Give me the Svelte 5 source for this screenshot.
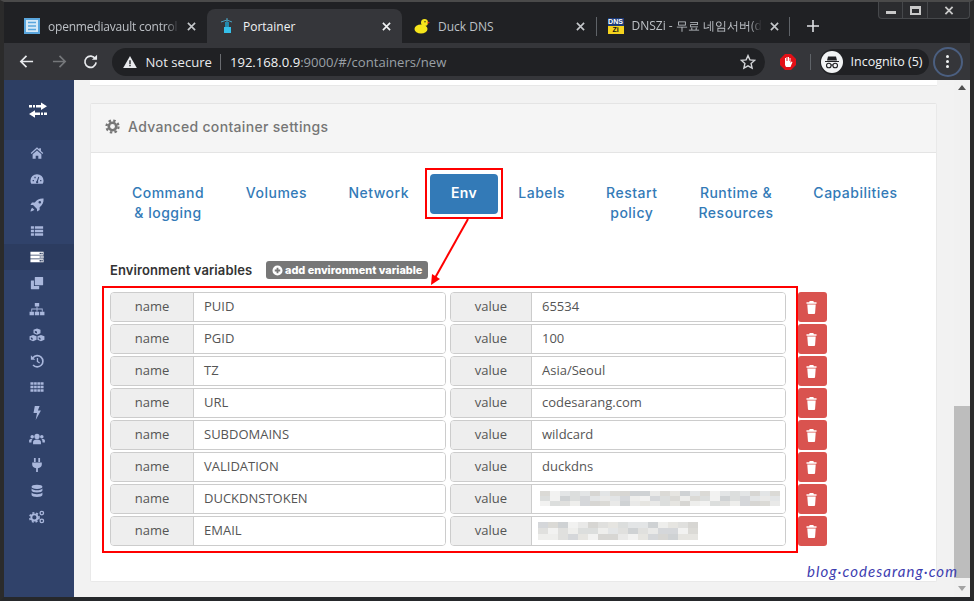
<script>
  const pills = [
    { lines: ['Command', '& logging'] },
    { lines: ['Volumes'] },
    { lines: ['Network'] },
    { lines: ['Env'], active: true },
    { lines: ['Labels'] },
    { lines: ['Restart', 'policy'] },
    { lines: ['Runtime &', 'Resources'] },
    { lines: ['Capabilities'] }
  ];
  const rows = [
    { name: 'PUID', value: '65534' },
    { name: 'PGID', value: '100' },
    { name: 'TZ', value: 'Asia/Seoul' },
    { name: 'URL', value: 'codesarang.com' },
    { name: 'SUBDOMAINS', value: 'wildcard' },
    { name: 'VALIDATION', value: 'duckdns' },
    { name: 'DUCKDNSTOKEN', blur: 'token' },
    { name: 'EMAIL', blur: 'email' }
  ];
  const shades = ['#e6e5e1', '#d5d7da', '#e0e0de', '#dcdedd', '#d7d6d3', '#eeeeec', '#e3e5e6', '#cfd2d4', '#f2f2f1', '#dbdad6', '#e9e9e8'];
  function cells(count, seed) {
    const out = [];
    let s = seed;
    for (let i = 0; i < count; i++) {
      s = (s * 31 + 17) % 97;
      out.push(shades[s % shades.length]);
    }
    return out;
  }
  const blurCells = { token: cells(72, 5), email: cells(48, 11) };
</script>

<div class="window">
  <div class="tabstrip">
    <div class="tab">
      <svg class="fav" viewBox="0 0 16 16"><rect width="16" height="16" fill="#5aa6dd"/><rect x="2" y="2" width="12" height="12" fill="#d6e9f7"/><path d="M4 4.5h8M4 8h8M4 11.5h8" stroke="#5aa6dd" stroke-width="1.6"/></svg>
      <span class="title fade first">openmediavault control</span>
      <svg class="close" viewBox="0 0 10 10"><path d="M1 1l8 8M9 1l-8 8"/></svg>
    </div>
    <div class="tab active">
      <svg class="fav" viewBox="0 0 16 16"><path d="M2 4l6-2 5 2M8 0v10" stroke="#4aa3c4" stroke-width="1" fill="none"/><rect x="5" y="9" width="7" height="6" fill="#35c0ea"/><rect x="6" y="4" width="4" height="5" fill="#2489ad"/></svg>
      <span class="title">Portainer</span>
      <svg class="close" viewBox="0 0 10 10"><path d="M1 1l8 8M9 1l-8 8"/></svg>
    </div>
    <div class="tab duck">
      <svg class="fav" viewBox="0 0 16 16"><ellipse cx="7" cy="11" rx="6.5" ry="4.5" fill="#f6e51b"/><circle cx="10.5" cy="4.5" r="3.5" fill="#f6e51b"/><path d="M13.5 3.5l2.5 1.2-2.5 1z" fill="#e0342a"/><circle cx="11" cy="3.8" r=".7" fill="#222"/></svg>
      <span class="title">Duck DNS</span>
      <svg class="close" viewBox="0 0 10 10"><path d="M1 1l8 8M9 1l-8 8"/></svg>
    </div>
    <div class="tab divided">
      <div class="dnsfav"><span class="dns">DNS</span><span class="zi">Zi</span></div>
      <span class="title fade">DNSZi - 무료 네임서버(d</span>
      <svg class="close" viewBox="0 0 10 10"><path d="M1 1l8 8M9 1l-8 8"/></svg>
    </div>
    <div class="newtab">
      <svg viewBox="0 0 12 12" width="12" height="12"><path d="M6 0v12M0 6h12" stroke="#dfe1e5" stroke-width="1.6"/></svg>
    </div>
    <div class="winctl">
      <span class="wbtn min"><i></i></span>
      <span class="wbtn max"><i></i></span>
      <span class="wbtn cls"><svg viewBox="0 0 10 10" width="10" height="9"><path d="M1 1l8 8M9 1l-8 8" stroke="#c9c9c9" stroke-width="2"/></svg></span>
    </div>
  </div>

  <div class="toolbar">
    <svg class="navicon" viewBox="0 0 16 16"><path d="M15 8H2M8 2L2 8l6 6" fill="none" stroke="#e8eaed" stroke-width="1.8"/></svg>
    <svg class="navicon" viewBox="0 0 16 16"><path d="M1 8h13M8 2l6 6-6 6" fill="none" stroke="#75777a" stroke-width="1.8"/></svg>
    <svg class="navicon reload" viewBox="0 0 16 16"><path d="M13.2 5.2A6 6 0 1 0 14 9" fill="none" stroke="#e8eaed" stroke-width="1.8"/><path d="M9.5 6H15V.8z" fill="#e8eaed"/></svg>
    <div class="omnibox">
      <svg class="warn" viewBox="0 0 16 14"><path d="M8 0l8 14H0z" fill="#e8eaed"/><path d="M7.2 5h1.6v4.5H7.2zM7.2 10.5h1.6V12H7.2z" fill="#202124"/></svg>
      <span class="secure">Not secure</span>
      <span class="omnisep"></span>
      <span class="url"><b>192.168.0.9</b>:9000/#/containers/new</span>
      <svg class="star" viewBox="0 0 16 16"><path d="M8 1.6l1.9 4.3 4.7.5-3.5 3.1 1 4.6L8 11.8l-4.1 2.3 1-4.6L1.400 6.400l4.700-.5z" fill="none" stroke="#d3d5d8" stroke-width="1.400"/></svg>
    </div>
    <svg class="hand" viewBox="0 0 16 16"><path d="M5 0h6l5 5v6l-5 5H5l-5-5V5z" fill="#e30f16"/><path d="M5 7V4h1v3h.5V3h1v4H8V3h1v4h.5V4h1v5l1-1.500 1 .5L10.500 13H6L5 11z" fill="#fff"/></svg>
    <span class="toolsep"></span>
    <div class="incognito">
      <svg class="spy" viewBox="0 0 22 22"><circle cx="11" cy="11" r="11" fill="#f1f3f4"/><path d="M7 5.500h8l1 4H6zM4 10h14v1H4z" fill="#202124"/><circle cx="7.800" cy="14.500" r="2.300" fill="none" stroke="#202124" stroke-width="1.100"/><circle cx="14.200" cy="14.500" r="2.300" fill="none" stroke="#202124" stroke-width="1.100"/><path d="M10 14h2" stroke="#202124"/></svg>
      <span>Incognito (5)</span>
    </div>
    <div class="kebab"><i></i><i></i><i></i></div>
  </div>

  <div class="viewport">
    <nav class="sidebar">
      <div class="brand">
        <svg viewBox="0 0 20 16" width="20" height="16"><path d="M1 3h3v2.400H1zM5 3h2v2.400H5zM8 3h5V.5L19 4.200 13 8V5.400H8zM19 10.600h-3V13h3zM15 10.600h-2V13h2zM12 10.600H7V8.200L1 12l6 3.700V13h5z" fill="#fff"/></svg>
      </div>
      <div class="item"><svg viewBox="0 0 16 16"><path d="M8 1.500L.8 8l1 1L8 3.500 14.200 9l1-1-2.700-2.400V2.500h-2v1.300z"/><path d="M3 9.500l5-4.500 5 4.500V14.500H9.500V11h-3v3.500H3z"/></svg></div>
      <div class="item"><svg viewBox="0 0 16 16"><path fill-rule="evenodd" d="M8 2.500A7.500 7.500 0 0 0 .5 10c0 1.500.4 2.700 1 3.500h13c.6-.8 1-2 1-3.500A7.500 7.500 0 0 0 8 2.500zM3 9h1.500v1.500H3zM5 5.500h1.500V7H5zM11.500 9H13v1.500h-1.500zM9.500 5.500l1 .5L9 10.500a1.300 1.300 0 1 1-1.300-.2z"/></svg></div>
      <div class="item"><svg viewBox="0 0 16 16"><path fill-rule="evenodd" d="M15.500.5c-4.500-.3-7.500 1.200-10 4.500H2.200L.5 8h3L8 12.500v3l3-1.800V10.500c3.300-2.500 4.800-5.500 4.500-10zM11.200 3.300a1.500 1.500 0 1 1 0 3 1.500 1.500 0 0 1 0-3zM2.500 11c-1 .8-1.700 2.500-2 4.500 2-.3 3.700-1 4.500-2z"/></svg></div>
      <div class="item"><svg viewBox="0 0 16 16"><path d="M1 2.500h3.500v3H1zM5.500 2.500H15v3H5.500zM1 6.500h3.500v3H1zM5.500 6.500H15v3H5.500zM1 10.500h3.500v3H1zM5.500 10.500H15v3H5.500z"/></svg></div>
      <div class="item current"><svg viewBox="0 0 16 16"><path fill-rule="evenodd" d="M.5 2h15v3.500H.5zM11 3v1.500h1.500V3zM13 3v1.500h1.500V3zM.5 6.300h15v3.400H.5zM11 7.300v1.400h1.500V7.300zM13 7.300v1.400h1.500V7.300zM.5 10.500h15V14H.5zM11 11.500V13h1.500v-1.500zM13 11.500V13h1.500v-1.500z"/></svg></div>
      <div class="item"><svg viewBox="0 0 16 16"><path d="M6 1h8.500a.5.500 0 0 1 .5.500V10a.5.500 0 0 1-.5.500H6a.5.500 0 0 1-.5-.500V1.500A.5.500 0 0 1 6 1z"/><path d="M4.500 5H1.500a.5.500 0 0 0-.5.500V14.500a.5.500 0 0 0 .5.500h8.500a.5.500 0 0 0 .5-.500V11.500H5a.5.500 0 0 1-.5-.500z"/></svg></div>
      <div class="item"><svg viewBox="0 0 18 16"><path d="M6.500 1h5v4h-5zM.5 11h5v4h-5zM6.500 11h5v4h-5zM12.500 11h5v4h-5z"/><path d="M8.500 5h1v2.500H15.500V11h-1V8.500h-5V11h-1V8.500h-5V11h-1V7.500h6z"/></svg></div>
      <div class="item"><svg viewBox="0 0 18 16"><path fill-rule="evenodd" d="M9 .5l4 1.500v4l-4 1.600-4-1.600V2zM6.500 3v2.200l2.500 1V4zM4.500 8l4 1.500v4l-4 1.700-4-1.700v-4zM2 10.500v2.200l2 .9v-2.300zM13.500 8l4 1.500v4l-4 1.700-4-1.700v-4zM11 10.500v2.200l2 .9v-2.300z"/></svg></div>
      <div class="item"><svg viewBox="0 0 16 16"><path d="M3.400 4.200A6.400 6.400 0 1 1 3.500 12.500" fill="none" stroke="currentColor" stroke-width="1.900"/><path d="M1 1.500l5 5H1z"/><path d="M8.500 4.500v4l2.500 1.700" fill="none" stroke="currentColor" stroke-width="1.500"/></svg></div>
      <div class="item"><svg viewBox="0 0 16 16"><path d="M.5 2.500h3.500v3H.5zM4.700 2.500h3v3h-3zM8.400 2.500h3v3h-3zM12 2.500h3.500v3H12zM.5 6.500h3.500v3H.5zM4.700 6.500h3v3h-3zM8.400 6.500h3v3h-3zM12 6.500h3.500v3H12zM.5 10.500h3.500v3H.5zM4.700 10.500h3v3h-3zM8.400 10.500h3v3h-3zM12 10.500h3.500v3H12z"/></svg></div>
      <div class="item"><svg viewBox="0 0 16 16"><path d="M5.500 0h5.500L9 5h3.500L6.500 16l1.500-8H4z"/></svg></div>
      <div class="item"><svg viewBox="0 0 18 16"><circle cx="9" cy="5" r="3"/><path d="M4.500 14v-2.500C4.500 9.500 6 8.500 9 8.500s4.500 1 4.500 3V14z"/><circle cx="3.500" cy="5.500" r="2"/><circle cx="14.500" cy="5.500" r="2"/><path d="M0 12V9.500c0-1 1.500-1.800 4-1.500-1 .8-1.200 2-1.300 4zM18 12V9.500c0-1-1.500-1.800-4-1.500 1 .8 1.200 2 1.300 4z"/></svg></div>
      <div class="item"><svg viewBox="0 0 16 16"><path d="M4.500 0H6.500v4.500H4.500zM9.500 0h2v4.500h-2zM2.500 5h11v2.500c0 2.500-1.800 3.800-4.500 4.200V16H7v-4.300C4.300 11.300 2.500 10 2.500 7.500z"/></svg></div>
      <div class="item"><svg viewBox="0 0 16 16"><ellipse cx="8" cy="3.200" rx="6.200" ry="2.400"/><path d="M1.800 5c1 1.400 3.300 2 6.200 2s5.200-.6 6.200-2v2.400c0 1.300-2.800 2.300-6.200 2.300s-6.200-1-6.200-2.300z"/><path d="M1.800 9.700c1 1.300 3.300 1.900 6.200 1.900s5.200-.6 6.200-1.900v2.800c0 1.300-2.800 2.300-6.200 2.300s-6.200-1-6.200-2.300z"/></svg></div>
      <div class="item"><svg viewBox="0 0 18 16"><circle cx="6" cy="8.500" r="3.500" fill="none" stroke="currentColor" stroke-width="2.200"/><circle cx="6" cy="8.500" r="5.300" fill="none" stroke="currentColor" stroke-width="1.800" stroke-dasharray="2.300 2.100"/><circle cx="14.500" cy="3.500" r="2" fill="none" stroke="currentColor" stroke-width="1.500"/><circle cx="14.500" cy="12.500" r="2" fill="none" stroke="currentColor" stroke-width="1.500"/></svg></div>
    </nav>

    <main class="main">
      <div class="prevcard"></div>
      <section class="card">
        <header class="cardhead">
          <svg class="cog" viewBox="0 0 16 16"><circle cx="8" cy="8" r="4" fill="none" stroke="#767676" stroke-width="2.800"/><circle cx="8" cy="8" r="6.400" fill="none" stroke="#767676" stroke-width="2.400" stroke-dasharray="2.600 2.430"/></svg>
          <span>Advanced container settings</span>
        </header>
        <div class="cardbody">
          <ul class="pills">
            {#each pills as p}
              <li class="pill" class:active={p.active}>
                {#each p.lines as l}<span>{l}</span>{/each}
              </li>
            {/each}
          </ul>
          <div class="envhead">
            <strong>Environment variables</strong>
            <span class="addbtn">
              <svg viewBox="0 0 12 12" width="11" height="11"><path fill-rule="evenodd" d="M6 .5a5.500 5.500 0 1 1 0 11 5.500 5.500 0 0 1 0-11zM5 3v2H3v2h2v2h2V7h2V5H7V3z" fill="#fff"/></svg>add environment variable
            </span>
          </div>
          <div class="rows">
            {#each rows as r}
              <div class="row">
                <div class="group">
                  <span class="addon nameaddon">name</span>
                  <span class="field">{r.name}</span>
                </div>
                <div class="group">
                  <span class="addon valaddon">value</span>
                  <span class="field">
                    {#if r.blur}
                      <span class="mosaic {r.blur}">
                        {#each blurCells[r.blur] as c}<i style="background:{c}"></i>{/each}
                      </span>
                    {:else}{r.value}{/if}
                  </span>
                </div>
                <span class="del">
                  <svg viewBox="0 0 12 14" width="11" height="13"><path d="M4 0h4l.6 1.300H11.500V2.800H.5V1.300H3.400zM1.400 3.800h9.200l-.7 9.200a1 1 0 0 1-1 1H3.100a1 1 0 0 1-1-1z" fill="#fff"/></svg>
                </span>
              </div>
            {/each}
          </div>
        </div>
      </section>
      <aside class="scrollbar">
        <span class="arrow up"></span>
        <span class="thumb"></span>
        <span class="arrow down"></span>
      </aside>
    </main>
  </div>

  <span class="mark envmark"></span>
  <span class="mark rowsmark"></span>
  <svg class="arrowline" viewBox="0 0 974 601" width="974" height="601">
    <path d="M468 219L435 278" stroke="#f00" stroke-width="2" fill="none"/>
    <path d="M431 285l1-11 8 5z" fill="#f00"/>
  </svg>
  <span class="watermark">blog·codesarang·com</span>
</div>

<style>
  :global(body) { margin: 0; }
  .window {
    position: relative;
    width: 974px;
    height: 601px;
    box-sizing: border-box;
    overflow: hidden;
    background: #202124;
    border-top: 2px solid #4a4a4a;
    border-left: 4px solid #2b2b2b;
    border-right: 4px solid #2b2b2b;
    border-bottom: 4px solid #26282b;
    display: flex;
    flex-direction: column;
    font-family: "Open Sans", sans-serif;
  }
  .tabstrip {
    height: 41px;
    flex: none;
    display: flex;
    align-items: flex-end;
    padding-left: 8px;
    position: relative;
  }
  .tab {
    width: 195px;
    flex: none;
    height: 34px;
    box-sizing: border-box;
    padding: 0 8px 0 12px;
    display: flex;
    align-items: center;
    gap: 8px;
    color: #bdc1c6;
    font-size: 12px;
    border-radius: 8px 8px 0 0;
    position: relative;
  }
  .tab.active { background: #35363a; color: #f1f3f4; }
  .tab.duck { width: 193.500px; }
  .tab.divided { width: 194px; }
  .tab.divided::before, .tab.divided::after {
    content: "";
    position: absolute;
    top: 8px;
    width: 1px;
    height: 19px;
    background: #5f6368;
  }
  .tab.divided::before { left: 0; }
  .tab.divided::after { right: 0; }
  .fav { width: 16px; height: 16px; flex: none; }
  .title { flex: 1; min-width: 0; white-space: nowrap; }
  .title.first { letter-spacing: -.2px; }
  .title.fade { -webkit-mask-image: linear-gradient(to right, #000 90%, transparent); mask-image: linear-gradient(to right, #000 90%, transparent); }
  .close { width: 9px; height: 9px; flex: none; margin-right: 3px; stroke: #c4c7ca; stroke-width: 1.800; }
  .tab.active .close { stroke: #f1f3f4; }
  .dnsfav { width: 16px; height: 16px; flex: none; display: flex; flex-direction: column; font: 700 7px/8px "Liberation Sans", sans-serif; text-align: center; }
  .dns { background: #1c3a78; color: #fff; }
  .zi { background: #f5d31e; color: #111; }
  .newtab { height: 34px; margin-left: 17px; display: flex; align-items: center; }
  .winctl {
    position: absolute;
    top: 0;
    right: 0;
    height: 16px;
    display: flex;
    border: 1px solid #46484b;
    border-top: 0;
    border-radius: 0 0 4px 4px;
    background: #2b2c2f;
  }
  .wbtn { height: 16px; display: flex; align-items: center; justify-content: center; box-sizing: border-box; border-right: 1px solid #46484b; }
  .wbtn.min { width: 24px; }
  .wbtn.max { width: 25px; }
  .wbtn.cls { width: 41px; border-right: 0; }
  .min i { display: block; width: 10px; height: 3px; background: #c9c9c9; margin-top: 5px; }
  .max i { display: block; width: 7px; height: 4px; border: 2px solid #c9c9c9; border-top-width: 3px; }
  .toolbar {
    height: 37px;
    flex: none;
    background: #35363a;
    display: flex;
    align-items: center;
    position: relative;
  }
  .navicon { width: 15px; height: 15px; flex: none; margin-left: 15px; margin-right: 3px; }
  .navicon.reload { margin-left: 13px; }
  .omnibox {
    margin-left: 10.500px;
    width: 653px;
    height: 28px;
    border-radius: 14px;
    background: #202124;
    flex: none;
    display: flex;
    align-items: center;
    padding-left: 10px;
    box-sizing: border-box;
    font-size: 13.100px;
    color: #e8eaed;
  }
  .warn { width: 14px; height: 12px; margin-left: 1px; }
  .secure { margin-left: 9px; }
  .omnisep { width: 1px; height: 16px; background: #6a6c70; margin: 0 9px 0 8px; }
  .url { color: #9aa0a6; flex: 1; white-space: nowrap; }
  .url b { font-weight: 400; color: #f1f3f4; }
  .star { width: 16px; height: 16px; margin-right: 9px; }
  .hand { width: 16px; height: 16px; margin-left: 15px; flex: none; }
  .toolsep { width: 1px; height: 16px; background: #5f6368; margin-left: 14px; flex: none; }
  .incognito {
    margin-left: 9px;
    width: 109px;
    height: 26px;
    border-radius: 13px;
    background: #202124;
    box-sizing: border-box;
    padding-left: 1px;
    flex: none;
    display: flex;
    align-items: center;
    gap: 8px;
    color: #f1f3f4;
    font-size: 12.500px;
    white-space: nowrap;
  }
  .spy { width: 22px; height: 22px; flex: none; }
  .kebab {
    margin-left: 4px;
    width: 30px;
    height: 30px;
    box-sizing: border-box;
    border: 2px solid #4b5f80;
    border-radius: 50%;
    flex: none;
    display: flex;
    flex-direction: column;
    align-items: center;
    justify-content: center;
    gap: 2px;
  }
  .kebab i { display: block; width: 3px; height: 3px; border-radius: 50%; background: #f1f3f4; }
  .viewport { flex: 1; min-height: 0; display: flex; }
  .sidebar { width: 70px; flex: none; background: #30426a; display: flex; flex-direction: column; }
  .brand { height: 60px; background: #2d3e63; display: flex; align-items: center; justify-content: center; flex: none; padding-right: 2px; }
  .item { height: 26px; flex: none; display: flex; align-items: center; justify-content: center; color: #a9b7dc; padding-right: 4px; }
  .item svg { height: 14px; width: 16px; fill: currentColor; }
  .item.current { background: #2c3c60; color: #fff; }
  .main { flex: 1; min-width: 0; background: #f2f2f2; position: relative; padding-left: 16px; display: flex; flex-direction: column; }
  .prevcard { width: 847px; height: 6px; flex: none; background: #fff; border-bottom: 1px solid #e7e7e7; box-sizing: border-box; }
  .card {
    margin-top: 17px;
    width: 847px;
    height: 479px;
    box-sizing: border-box;
    background: #fff;
    border: 1px solid #e9e9e9;
    border-top-color: #e4e4e4;
    border-radius: 2px;
    flex: none;
  }
  .cardhead {
    height: 49px;
    box-sizing: border-box;
    background: #f5f5f5;
    border-bottom: 1px solid #e4e4e4;
    padding: 0 0 3px 14px;
    display: flex;
    align-items: center;
    gap: 8px;
    font-family: "Inter", sans-serif;
    font-size: 14px;
    font-weight: 500;
    letter-spacing: .32px;
    color: #767676;
  }
  .cog { width: 15px; height: 15px; flex: none; }
  .cardbody { padding: 21px 0 0 19.500px; }
  .pills {
    list-style: none;
    margin: 0;
    padding: 0;
    display: grid;
    grid-template-columns: 115px 102px 102.500px 68px 87.500px 92.500px 116px 123px;
    align-items: start;
    font-family: "Inter", sans-serif;
    font-size: 14px;
    font-weight: 500;
    letter-spacing: .5px;
    line-height: 20px;
    color: #337ab7;
    text-align: center;
    height: 87px;
  }
  .pill { padding: 9px 0 10px; border-radius: 4px; height: 40px; box-sizing: border-box; white-space: nowrap; }
  .pill span { display: block; }
  .pill.active { background: #337ab7; color: #fff; font-weight: 600; letter-spacing: .25px; }
  .envhead { display: flex; align-items: center; gap: 14px; height: 18px; margin-left: -.5px; }
  .envhead strong { font-family: "Inter", sans-serif; font-size: 13px; font-weight: 600; letter-spacing: .1px; color: #333; }
  .addbtn {
    width: 162px;
    height: 18px;
    box-sizing: border-box;
    background: #777;
    border-radius: 3px;
    color: #fff;
    display: flex;
    align-items: center;
    justify-content: center;
    gap: 2px;
    font-family: "Inter", sans-serif;
    font-size: 10.900px;
    font-weight: 800;
    white-space: nowrap;
  }
  .rows { margin: 13px 0 0 -.5px; display: flex; flex-direction: column; gap: 2px; }
  .row { display: flex; height: 30px; }
  .group { display: flex; height: 30px; box-sizing: border-box; border: 1px solid #ccc; border-radius: 4px; color: #555; font-size: 13px; overflow: hidden; }
  .group:first-child { width: 336px; }
  .group:nth-child(2) { width: 336px; margin-left: 4px; }
  .addon { background: #eee; border-right: 1px solid #ccc; box-sizing: border-box; display: flex; align-items: center; justify-content: center; flex: none; padding-bottom: 2px; }
  .nameaddon { width: 83px; }
  .valaddon { width: 81px; }
  .field { flex: 1; display: flex; align-items: center; padding: 0 0 2px 10px; background: #fff; white-space: nowrap; }
  .mosaic { display: grid; grid-template-rows: repeat(3, 5px); grid-auto-flow: column; }
  .mosaic i { display: block; width: 10px; height: 5px; }
  .mosaic.token { grid-template-columns: repeat(24, 10px); margin-left: -2px; }
  .mosaic.email { grid-template-columns: repeat(16, 10px); margin: 2px 0 0 -4px; grid-template-rows: repeat(3, 5.700px); }
  .mosaic.email i { height: 5.700px; }
  .del { width: 29px; height: 30px; margin-left: 12px; background: #d9534f; border-radius: 3px; display: flex; align-items: center; justify-content: center; padding-right: 2px; box-sizing: border-box; }
  .scrollbar {
    position: absolute;
    top: 0;
    right: 0;
    bottom: 0;
    width: 16px;
    background: #f1f1f1;
  }
  .arrow { position: absolute; left: 4px; width: 0; height: 0; border: 4px solid transparent; }
  .arrow.up { top: 5px; border-bottom: 5px solid #505050; border-top: 0; }
  .arrow.down { bottom: 6px; border-top: 5px solid #a3a3a3; border-bottom: 0; }
  .thumb { position: absolute; left: 0; right: 0; top: 326px; height: 172px; background: #bdbdbd; }
  .mark { position: absolute; box-sizing: border-box; border: 2px solid #f00; }
  .envmark { left: 421px; top: 166px; width: 78px; height: 51px; }
  .rowsmark { left: 98px; top: 284px; width: 696px; height: 267px; }
  .arrowline { position: absolute; left: -4px; top: -2px; }
  .watermark {
    position: absolute;
    left: 803px;
    top: 560px;
    font-family: "Lato", sans-serif;
    font-style: italic;
    font-size: 15px;
    letter-spacing: 1.050px;
    color: #3d3db0;
    white-space: nowrap;
  }
</style>
